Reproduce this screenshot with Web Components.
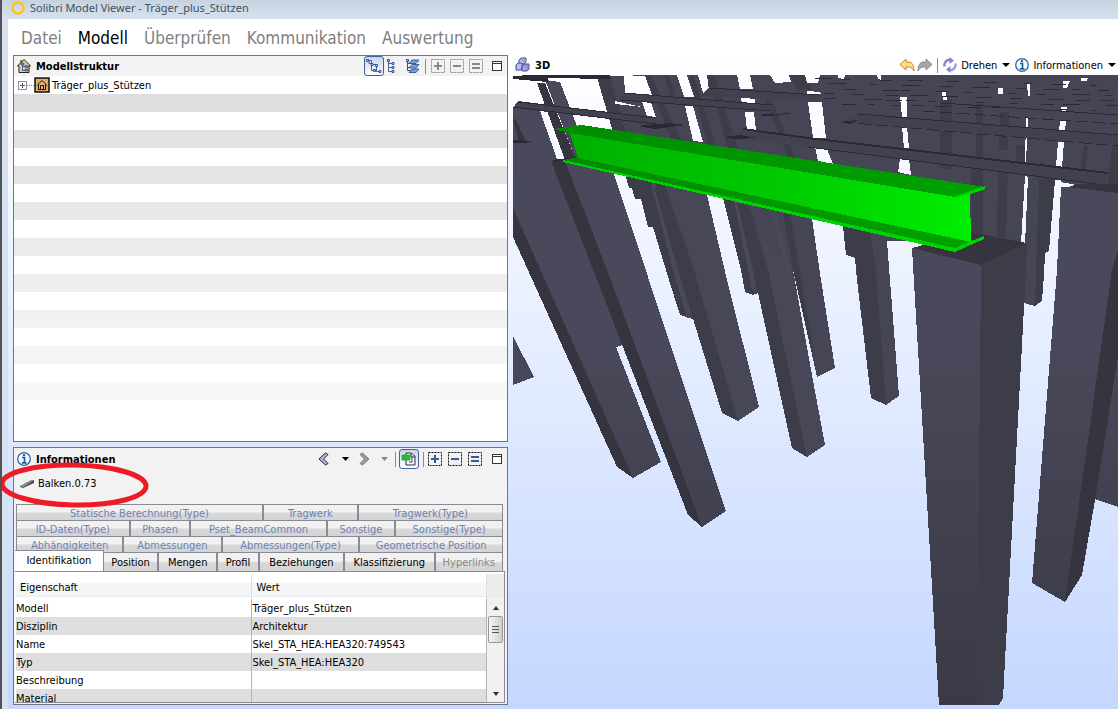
<!DOCTYPE html>
<html lang="de">
<head>
<meta charset="utf-8">
<title>Solibri Model Viewer</title>
<style>
html, body { margin: 0; height: 100%; }
body { font: 11px/18px "DejaVu Sans Condensed", "Noto Sans", sans-serif; color: #000; }
</style>
</head>
<body>
<viewer-window caption="Solibri Model Viewer - Träger_plus_Stützen">
  <main-menu slot="menu"></main-menu>
  <tool-panel slot="side" caption="Modellstruktur" icon="house" class="fill">
    <tool-button slot="actions" icon="treeDiag" label="Hierarchie" pressed></tool-button>
    <tool-button slot="actions" icon="treeList" label="Liste"></tool-button>
    <tool-button slot="actions" icon="layers" label="Ebenen"></tool-button>
    <tool-divider slot="actions"></tool-divider>
    <tool-button slot="actions" icon="plusGray" label="Hinzufügen"></tool-button>
    <tool-button slot="actions" icon="minusGray" label="Entfernen"></tool-button>
    <tool-button slot="actions" icon="equalGray" label="Setzen"></tool-button>
    <tool-button slot="actions" icon="maximize" label="Maximieren"></tool-button>
    <model-tree></model-tree>
  </tool-panel>
  <tool-panel slot="side" caption="Informationen" icon="info" class="info">
    <tool-button slot="actions" icon="back" label="Zurück"></tool-button>
    <tool-button slot="actions" icon="caret" label="Verlauf zurück"></tool-button>
    <tool-button slot="actions" icon="forward" label="Vorwärts"></tool-button>
    <tool-button slot="actions" icon="caretGray" label="Verlauf vorwärts"></tool-button>
    <tool-divider slot="actions"></tool-divider>
    <tool-button slot="actions" icon="follow" label="Auswahl folgen" pressed></tool-button>
    <tool-divider slot="actions"></tool-divider>
    <tool-button slot="actions" icon="plus" label="Hinzufügen"></tool-button>
    <tool-button slot="actions" icon="minus" label="Entfernen"></tool-button>
    <tool-button slot="actions" icon="equal" label="Setzen"></tool-button>
    <tool-button slot="actions" icon="maximize" label="Maximieren"></tool-button>
    <selected-item>Balken.0.73</selected-item>
    <property-tabs><property-table></property-table></property-tabs>
  </tool-panel>
  <scene-view slot="scene"></scene-view>
</viewer-window>

<script>
const dashed = (c, d, glyph) => `<rect x="1.5" y="1.5" width="13" height="13" fill="none" stroke="${d}" stroke-dasharray="2 1"/><path d="${glyph}" stroke="${c}" stroke-width="2" fill="none"/>`;
const P = "M4 8H12M8 4V12", M = "M4 8H12", E = "M4 6H12M4 10H12";
const ICONS = {
  logo: '<circle cx="8" cy="8" r="5.6" fill="none" stroke="#fcc70c" stroke-width="2.4"/>',
  house: '<path d="M8 1.5L14.5 8H13V14.5H3V8H1.5Z" fill="#e9cf8e" stroke="#222"/><path d="M5 2V5" stroke="#222"/><path d="M6.5 5.5V13M6.5 8.5H10M6.5 12.5H10" fill="none" stroke="#3f5fa5"/><path d="M5 5H8V7H5ZM9 7.5H12V9.5H9ZM9 11H12V13H9Z" fill="#6384c8" stroke="#2f4e91" stroke-width=".6"/>',
  building: '<rect x="1" y="1" width="14" height="14" fill="#dfa968" stroke="#111" stroke-width="1.5"/><path d="M3 8.5L8 3.5L13 8.5M4.5 7.5V12.5H11.5V7.5" fill="#e5b57c" stroke="#111"/><path d="M6.5 12V8.5H9.5V12" fill="none" stroke="#111"/>',
  treeDiag: '<path d="M1.5 2.5H5.5V12.5H9M5.5 6.5H10.5V13.5H14M3 2.5V5.5H6" fill="none" stroke="#42629e"/><path d="M.5 1.5H2.5V3.5H.5ZM5 5.5H7V7.5H5ZM9.5 6.5H11.5V8.5H9.5ZM7.5 11.5H9.5V13.5H7.5ZM13 12.5H15V14.5H13Z" fill="#a9c6f0" stroke="#2f4f93" stroke-width=".9"/>',
  treeList: '<path d="M1.5 2.5V13.5H5M1.5 5.5H5M1.5 9.5H5" fill="none" stroke="#42629e"/><path d="M.5 1.5H2.5V3.5H.5ZM5 4.5H7V6.5H5ZM5 8.5H7V10.5H5ZM5 12.5H7V14.5H5Z" fill="#a9c6f0" stroke="#2f4f93" stroke-width=".9"/>',
  layers: '<path d="M1.5 2V12.5H5M1.5 5.5H5M1.5 9.5H5" fill="none" stroke="#2f4f93"/><path d="M.5 1.5H2.5V3.5H.5Z" fill="#a9c6f0" stroke="#2f4f93"/><path d="M6 11H13L10 14.5H3ZM6 6.5H13L10 10H3ZM6 2H13L10 5.5H3Z" fill="#7fa0cc" stroke="#2f5597" stroke-width=".9"/>',
  plusGray: dashed('#888', '#888', P), minusGray: dashed('#888', '#888', M), equalGray: dashed('#888', '#888', E),
  plus: dashed('#3a5796', '#111', P), minus: dashed('#3a5796', '#111', M), equal: dashed('#3a5796', '#111', E),
  maximize: '<rect x="3.5" y="3.5" width="9" height="9" fill="#fff" stroke="#333"/><path d="M3 5.5H13" stroke="#333"/>',
  info: '<circle cx="8" cy="8" r="6.3" fill="#f6fbff" stroke="#2a69a5" stroke-width="1.3"/><path d="M6 6.5H8.5V11.5M5.8 11.8H10.5" fill="none" stroke="#15619f" stroke-width="1.7"/><circle cx="8" cy="4" r="1.2" fill="#15619f"/>',
  back: '<path d="M10.5 2L4 8L10.5 14L13 12.5L8.5 8L13 3.5Z" fill="#b7b5e4" stroke="#222"/>',
  forward: '<path d="M7.5 2L14 8L7.5 14L5 12.5L9.5 8L5 3.5Z" fill="#9a9a9a" stroke="#808080"/>',
  caret: '<path d="M7 6H14L10.5 10Z" fill="#000"/>', caretGray: '<path d="M6 6H13L9.5 10Z" fill="#888"/>',
  follow: '<path d="M5 2H10L14 5V14H5Z" fill="#eef0fb" stroke="#333"/><path d="M10 2V6H14" fill="#ccd" stroke="#333"/><path d="M1 4H9V9H1Z" fill="#28bf35" stroke="#159024" stroke-width=".6"/><path d="M11 6V11H8" stroke="#555" fill="none"/>',
  beam: '<path d="M1 10L12 4L15 4L4 11Z" fill="#888"/><path d="M1 10L4 11L15 4V7L4 12L1 11Z" fill="#4a4a4a"/>',
  cubes: '<path d="M4 3L6 1H11V5L9 7H4Z" fill="#c9c5f0" stroke="#3a4f96"/><path d="M1 8L3 6H7V11L6 13H1Z" fill="#bdbaf0" stroke="#3a4f96"/><path d="M7 9L9 7H14V12L12 14H7Z" fill="#a9a7e8" stroke="#3a4f96"/><path d="M4 3H9V7M9 3L11 1M7 9H12V14M12 9L14 7" fill="none" stroke="#6d76b8" stroke-width=".7"/>',
  undo: '<path d="M1 7.5L7 2V5H10C13 5.5 15 8 15 14C13 10.5 11 10 9 10H7V13Z" fill="#ffdb84" stroke="#bb8a2c"/>',
  redo: '<path d="M15 7.5L9 2V5H6C3 5.5 1 8 1 14C3 10.5 5 10 7 10H9V13Z" fill="#a6a6a6" stroke="#8e8e8e"/>',
  rotate: '<path d="M2.5 9.5A5.5 5.5 0 0 1 8 2.8" fill="none" stroke="#8583d0" stroke-width="2.4"/><path d="M7.5 0L12 3.5L7.5 7Z" fill="#8684d0"/><path d="M13.5 6.5A5.5 5.5 0 0 1 8 13.2" fill="none" stroke="#9a98de" stroke-width="2.4"/><path d="M8.5 9V16L4 12.5Z" fill="#8684d0"/>'
};
const icon = n => `<svg viewBox="0 0 16 16" width="16" height="16" aria-hidden="true">${ICONS[n]}</svg>`;
const define = (name, render) => customElements.define(name, class extends HTMLElement {
  constructor() {
    super();
    const t = document.createElement('template');
    t.innerHTML = '<style>*{box-sizing:border-box}svg{display:block;flex:none}button{font:inherit;color:inherit;margin:0;padding:0;border:0;background:none}</style>' + render(this);
    this.attachShadow({ mode: 'open' }).append(t.content.cloneNode(true));
  }
});

define('viewer-window', el => `<style>
  :host { display: flex; flex-direction: column; box-sizing: border-box; min-height: 100vh; overflow: hidden;
    border-left: 2px solid #515157; background: linear-gradient(#c7d3df, #d6e2f0 20px, #d6e2f0); padding-left: 6px; }
  .title { display: flex; align-items: center; gap: 4px; height: 19px; padding: 0 0 4px 2px; color: #42505e;
    font: 11px/15px "Noto Sans", "Open Sans", sans-serif; white-space: nowrap; }
  .client { flex: 1; display: flex; flex-direction: column; background: linear-gradient(#fff 36px, #c5d7ff); }
  .work { flex: 1; display: grid; grid-template-columns: minmax(0, 495fr) minmax(0, 605fr); gap: 5px; padding-left: 5px; }
  .side { display: flex; flex-direction: column; gap: 5px; padding-bottom: 4px; }
  .scene { display: flex; flex-direction: column; }
  </style>
  <div class="title">${icon('logo')}<span>${el.getAttribute('caption')}</span></div>
  <div class="client"><slot name="menu"></slot><div class="work"><div class="side"><slot name="side"></slot></div><div class="scene"><slot name="scene"></slot></div></div></div>`);

define('main-menu', () => `<style>
  :host { display: block; }
  nav { display: flex; gap: 16px; height: 36px; align-items: center; padding: 2px 0 0 13px; font-size: 17px; line-height: 24px; }
  a { color: #808080; text-decoration: none; } a[aria-current] { color: #000; }
  </style><nav>${['Datei', 'Modell', 'Überprüfen', 'Kommunikation', 'Auswertung'].map(t => `<a href="#"${t === 'Modell' ? ' aria-current="page"' : ''}>${t}</a>`).join('')}</nav>`);

define('tool-panel', el => `<style>
  :host { display: flex; flex-direction: column; border: 1px solid #6f7680; background: #f2f2f2; position: relative; }
  :host(.fill) { flex: 1; --gap: 3px; --divider-margin: 1px; } :host(.info) { --gap: 4px; --divider-margin: -1px; }
  header { display: flex; align-items: center; height: 20px; padding: 0 2px; gap: 4px; flex: none; }
  :host(.info) header { height: 22px; }
  h2 { margin: 0; font-size: 11px; line-height: 18px; padding-top: 1px; flex: 1; white-space: nowrap; }
  .actions { display: flex; align-items: center; gap: var(--gap); }
  </style><header>${icon(el.getAttribute('icon'))}<h2>${el.getAttribute('caption')}</h2><div class="actions"><slot name="actions"></slot></div></header><slot></slot>`);

define('tool-button', el => `<style>
  :host { display: block; }
  :host([icon=maximize]) { margin-left: 2px; }
  button { display: flex; align-items: center; justify-content: center; width: 16px; height: 18px; }
  :host([pressed]) button { width: 20px; height: 20px; border: 1px solid #41639c; border-radius: 3px; background: linear-gradient(#c6d5ea, #fff); }
  </style><button type="button" aria-label="${el.getAttribute('label')}"${el.hasAttribute('pressed') ? ' aria-pressed="true"' : ''}>${icon(el.getAttribute('icon'))}</button>`);

define('tool-divider', () => `<style>:host { display: block; width: 1px; height: 15px; background: #8c8c8c; margin: 0 var(--divider-margin, 0) 0 0; }</style>`);

define('model-tree', () => `<style>
  :host { display: block; flex: 1; background: linear-gradient(transparent 18px, #fffc 324px, #fff 325px), repeating-linear-gradient(#fff 0 18px, #dedede 18px 36px); }
  .row { display: flex; align-items: center; height: 18px; padding-left: 4px; }
  button { width: 9px; height: 9px; flex: none; border: 1px solid #8b919b; background: linear-gradient(#3d5aa0, #3d5aa0) center/5px 1px no-repeat, linear-gradient(#3d5aa0, #3d5aa0) center/1px 5px no-repeat, #fff; }
  i { width: 7px; border-top: 1px dotted #888; } span { padding: 2px 0 0 2px; }
  </style><div class="row"><button type="button" aria-label="Aufklappen"></button><i></i>${icon('building')}<span>Träger_plus_Stützen</span></div>`);

define('selected-item', () => `<style>
  :host { display: flex; align-items: center; gap: 3px; height: 28px; margin-bottom: 6px; padding-left: 5px; position: relative; flex: none; }
  .ring { position: absolute; left: -15px; top: -9px; pointer-events: none; z-index: 2; }
  </style>${icon('beam')}<span><slot></slot></span>
  <svg class="ring" width="150" height="48" viewBox="0 0 150 48"><ellipse cx="75" cy="24" rx="72" ry="20" fill="none" stroke="#ed1c24" stroke-width="5" transform="rotate(1 75 24)"/></svg>`);

const ROWS = [
  [['Statische Berechnung(Type)', 248], ['Tragwerk', 94], ['Tragwerk(Type)', 145]],
  [['ID-Daten(Type)', 114], ['Phasen', 60], ['Pset_BeamCommon', 137], ['Sonstige', 68], ['Sonstige(Type)', 108]],
  [['Abhängigkeiten', 107], ['Abmessungen', 98], ['Abmessungen(Type)', 138], ['Geometrische Position', 144]],
  [['Identifikation', 90], ['Position', 55], ['Mengen', 58], ['Profil', 41], ['Beziehungen', 85], ['Klassifizierung', 91], ['Hyperlinks', 68]]
];
define('property-tabs', () => `<style>
  :host { display: block; padding: 0 2px 1px; }
  [role=tablist] { padding: 0 2px 0 0; }
  .row { display: flex; height: 16px; border-left: 1px solid #888b94; }
  .row:last-child { height: 19px; border-left: 0; margin-left: -1px; }
  button { flex: 1 1 0; min-width: 0; overflow: hidden; white-space: nowrap; height: 100%; color: #6d83b4; line-height: 18px;
    border-top: 1px solid #888b94; border-right: 2px solid #888b94; background: linear-gradient(#f1f1f1 45%, #d8d8d8 55%, #d4d4d4); }
  .row button:last-child { border-right-width: 1px; }
  .row:last-child button { color: #000; line-height: 20px; }
  .row:last-child button:disabled { color: #888; }
  .row button[aria-selected=true] { background: #fff; height: 21px; margin-top: -2px; z-index: 1; border-right-width: 1px; }
  .pane { background: #fff; border: 1px solid #888b94; border-width: 1px 1px 1px 0; margin: 0 0 0 -1px; height: 132px; padding: 2px 0 0 1px; }
  </style><div role="tablist">${ROWS.map(r => `<div class="row">${r.map(([t, w]) => `<button type="button" role="tab" style="flex-grow:${w}"${t === 'Identifikation' ? ' aria-selected="true"' : ''}${t === 'Hyperlinks' ? ' disabled' : ''}>${t}</button>`).join('')}</div>`).join('')}</div><div class="pane" role="tabpanel"><slot></slot></div>`);

const DATA = [['Modell', 'Träger_plus_Stützen'], ['Disziplin', 'Architektur'], ['Name', 'Skel_STA_HEA:HEA320:749543'], ['Typ', 'Skel_STA_HEA:HEA320'], ['Beschreibung', ''], ['Material', '']];
define('property-table', () => `<style>
  :host { display: flex; height: 128px; overflow: hidden; }
  table { flex: 1; width: 100%; min-width: 0; border-collapse: separate; border-spacing: 0; table-layout: fixed; align-self: flex-start; }
  th { height: 25px; padding: 2px 4px 0; text-align: left; font-weight: normal; background: linear-gradient(#fff 9px, #f5f6f7 9px, #f3f4f5 22px, #d8d9db 22px, #fff 23px); border-right: 1px solid #dfe0e2; }
  td { height: 18px; padding: 1px 1px 0 0; line-height: 17px; white-space: nowrap; border-right: 1px solid #b5b5b5; }
  th:last-child { padding-left: 5px; } td:last-child { padding-left: 1px; }
  tbody tr:nth-child(even) { background: #dedede; }
  .bar { width: 17px; flex: none; display: flex; flex-direction: column; background: linear-gradient(#ececec 24px, #f1f1f1 24px); padding: 25px 1px 0; align-items: stretch; }
  .bar button { height: 17px; display: grid; place-items: center; }
  .thumb { height: 27px; border: 1px solid #979797; border-radius: 2px; background: linear-gradient(90deg, #f5f5f5, #cfcfd1); display: grid; place-items: center; }
  .thumb i { width: 7px; height: 8px; background: repeating-linear-gradient(#555 0 1px, transparent 1px 3px); }
  .space { flex: 1; }
  </style><table><thead><tr><th scope="col">Eigenschaft</th><th scope="col">Wert</th></tr></thead><tbody>${DATA.map(([a, b]) => `<tr><td>${a}</td><td>${b}</td></tr>`).join('')}</tbody></table>
  <div class="bar"><button type="button" aria-label="Nach oben"><svg width="6" height="4"><path d="M0 4L3 0L6 4Z" fill="#333"/></svg></button><div class="thumb"><i></i></div><div class="space"></div><button type="button" aria-label="Nach unten"><svg width="6" height="4"><path d="M0 0L3 4L6 0Z" fill="#333"/></svg></button></div>`);

const poly = (fill, ...list) => list.map(p => `<polygon fill="${fill}" points="${p}"/>`).join('');
const L = 'url(#face)', D = '#35343f', K = '#2b2a34', S = 'url(#sky)', N = '#3d3c49';
const dashes = (() => {
  let out = '', seed = 7;
  const rnd = () => (seed = (seed * 16807) % 2147483647) / 2147483647;
  for (let y = 78; y < 108; y += 5) for (let x = 815 + rnd() * 30; x < 1112; x += 18 + rnd() * 28) {
    const yy = Math.round(y + (x - 815) / 40), w = Math.round(6 + rnd() * 12);
    out += `M${Math.round(x)} ${yy}h${w}v1h-${w}z`;
  }
  return `<path fill="${K}" d="${out}"/>`;
})();
define('scene-view', () => `<style>
  :host { display: flex; flex: 1; flex-direction: column; }
  header { display: flex; align-items: center; height: 20px; padding: 0 2px; gap: 4px; flex: none; white-space: nowrap; }
  h2 { margin: 0; flex: 1; font-size: 11px; line-height: 18px; padding-top: 1px; }
  header button { display: flex; align-items: center; gap: 3px; }
  header span { padding-top: 1px; }
  .pair { display: flex; gap: 2px; }
  .caret { width: 0; border: 4px solid transparent; border-top-color: #000; border-bottom: 0; margin-left: 2px; }
  .view { flex: 1; min-height: 634px; position: relative; }
  .view svg { position: absolute; inset: 0; width: 100%; height: 100%; }
  </style>
  <header>${icon('cubes')}<h2>3D</h2><div class="pair"><button type="button" aria-label="Rückgängig">${icon('undo')}</button><button type="button" aria-label="Wiederholen">${icon('redo')}</button></div><tool-divider></tool-divider>
  <button type="button" aria-haspopup="menu">${icon('rotate')}<span>Drehen</span><i class="caret"></i></button>
  <button type="button" aria-haspopup="menu">${icon('info')}<span>Informationen</span><i class="caret"></i></button></header>
  <div class="view"><svg viewBox="513 75 605 634" preserveAspectRatio="xMinYMin slice" shape-rendering="crispEdges" role="img" aria-label="3D-Modell">
  <defs>
    <linearGradient id="sky" gradientUnits="userSpaceOnUse" x1="0" y1="55" x2="0" y2="709"><stop offset="0" stop-color="#fff"/><stop offset="1" stop-color="#c5d7ff"/></linearGradient>
    <linearGradient id="face" gradientUnits="userSpaceOnUse" x1="0" y1="75" x2="0" y2="709"><stop offset="0" stop-color="#4a495b"/><stop offset=".4" stop-color="#4a495b"/><stop offset="1" stop-color="#3a3945"/></linearGradient>
    <linearGradient id="web" x1="0" x2="1" y1="0" y2="0"><stop offset="0" stop-color="#00b000"/><stop offset=".5" stop-color="#00c800"/><stop offset="1" stop-color="#00ee00"/></linearGradient>
    <linearGradient id="flange" x1="0" x2="1" y1="0" y2="0"><stop offset="0" stop-color="#008c00"/><stop offset="1" stop-color="#00a200"/></linearGradient>
  </defs>
  <rect x="513" y="75" width="605" height="634" fill="${S}"/>
  ${poly(L, '513,336 534,377 513,385', '513,108 540,111 557,158 572,160 622,345 616,347 661,462 633,478 513,208')}
  ${poly(D, '513,208 513,237 617,467 633,478', '513,120 515,118 526,141 519,141', '537,83 545,83 576,160 565,160')}
  ${poly(L, '545,80 560,82 592,165 576,160')}
  ${poly('#464555', '597,77 645,75 1118,75 1118,192 1060,182 1055,180 1049,251 1045,253 1044,275 1042,301 1035,306 1024,303 1021,243 971,240 887,241 890,280 899,396 886,405 871,398 857,280 855,258 846,255 843,226 812,219 821,280 835,368 817,377 793,270 723,198 707,195 640,190')}
  ${poly('#484758', '612,125 707,195 727,280 759,407 738,421 694,270 669,280 653,227 648,227 641,199 635,199 629,177', '723,198 793,270 812,375 825,445 807,457 768,270')}
  ${poly(N, '629,177 635,199 641,199 648,227 653,227 669,280 680,315 692,319 694,317 678,270 665,185', '723,198 741,270 745,292 753,295 758,293 792,448 807,457 768,270 750,207', '783,213 793,270 817,377 810,330 790,213', '843,226 846,255 855,258 857,270 871,398 886,405 876,270 870,232', '597,77 610,77 642,190 629,188', '1040,160 1055,180 1049,251 1045,253 1044,275 1042,301 1035,306 1036,270')}
  ${poly('#4a4959', '650,180 655,182 682,280 692,318 687,318 673,270', '734,200 737,202 753,270 757,293 752,290', '771,212 776,212 790,270 793,290 788,280')}
  ${poly(N, '662,180 665,185 694,270 738,421 722,413 678,270 655,190')}
  ${poly(N, '645,75 651,75 690,160 678,155', '664,75 669,75 675,96 670,96', '689,75 694,75 722,165 712,162', '707,75 714,75 745,168 733,165', '765,100 772,100 800,170 792,168', '790,75 806,75 812,90 797,90')}
  ${poly(S, '540,111 547,111 564,159 557,159', '624,76 645,76 652,95 625,93', '642,101 651,102 656,117 647,116', '677,75 687,75 694,97 684,97', '685,106 693,106 703,142 693,141', '698,75 707,75 709,91 703,93', '737,75 750,75 753,89 740,89', '741,97 754,97 756,105 742,105', '745,112 754,112 756,130 747,130', '770,75 789,75 791,82 775,83', '805,75 820,75 818,83 807,83', '808,102 822,102 826,138 813,138', '815,147 827,149 833,164 818,161', '900,97 907,97 907,118 902,117', '902,127 907,127 909,148 904,148', '900,159 909,159 911,175 898,172', '942,91 946,91 947,103 943,103', '998,88 1003,88 1003,94 998,94', '1027,84 1030,84 1030,96 1028,96', '1063,81 1070,81 1067,88 1063,88', '1081,78 1088,78 1087,81 1081,81', '1060,121 1066,121 1065,131 1059,131', '1058,142 1064,142 1062,167 1056,166', '1026,118 1028,118 1026,162 1025,162', '838,75 845,75 844,79 838,78', '877,75 881,75 881,80 878,79', '1061,107 1067,107 1066,111 1062,111', '807,91 820,92 821,94 807,94', '1055,180 1061,180 1057,280 1044,280 1045,253 1049,251', '1025,176 1028,177 1025,245 1021,243', '615,104 642,107 615,101')}
  ${poly(N, '940,100 952,100 952,170 940,168', '976,104 983,104 983,168 976,168', '1000,112 1009,112 1008,150 999,150', '1016,145 1025,146 1025,165 1016,163', '998,170 1008,172 1006,238 997,236', '971,165 983,166 983,236 972,234', '1084,145 1088,146 1085,172 1080,172', '1112,145 1118,145 1118,190 1107,190')}
  ${poly('#42414f', '518,101 656,118 656,124 513,108', '624,93 773,105 773,111 620,100', '710,87 820,95 820,102 700,96', '743,129 808,137 1108,174 1105,186 808,147 725,137', '858,113 1118,135 1118,146 842,122')}
  ${dashes}
  <path d="M513 107L655 124M519 102L656 118M620 100L770 111M624 93L772 105M710 88L818 95M858 114L1118 135" stroke="${K}" stroke-width="1" fill="none"/>
  <path d="M743 129L808 138L1108 173" stroke="${K}" stroke-width="2" fill="none"/>
  <path d="M808 147L1105 185M941 103L1118 115" stroke="${K}" fill="none"/><path d="M842 122L1118 146M923 111L1118 124" stroke="${K}" stroke-dasharray="12 5" fill="none"/>
  ${poly(K, '513,76 530,75 610,75 611,79 548,78 548,82 513,79', '513,140 533,141 525,143 513,143', '637,126 668,123 686,125 655,129', '723,137 740,135 758,138 735,139', '752,115 794,113 770,116', '839,122 858,120 850,124', '551,160 578,157 590,162 565,163')}
  ${poly(L, '565,161 612,168 614,174 649,280 726,511 702,527 611,280', '1061,187 1068,187 1118,193 1118,250 1112,270 1065,602 1032,583 1057,270', '1118,357 1118,507 1095,499 1100,450')}
  ${poly(D, '551,161 565,161 611,280 702,527 688,515 597,280', '1118,250 1118,357 1095,500 1082,575 1065,602 1112,270')}
  ${poly(D, '1068,187 1078,184 1118,184 1118,193')}
  ${poly(D, '912,248 971,232 1027,243 981,265')}
  ${poly(L, '912,248 981,265 977,705 939,705')}
  ${poly(N, '981,265 1027,243 1026,270 1003,698 999,705 977,705')}
  ${poly('url(#flange)', '553,129 582,125 985,187 955,197 570,133', '563,160 578,157 970,241 984,237 955,250')}
  ${poly('url(#web)', '570,133 955,197 970,193 971,242 578,158')}
  ${poly('#00d400', '955,196 985,186 985,189 970,194 955,198', '563,160 955,248 984,236 984,239 955,252 563,162')}
  </svg></div>`);
</script>
</body>
</html>
